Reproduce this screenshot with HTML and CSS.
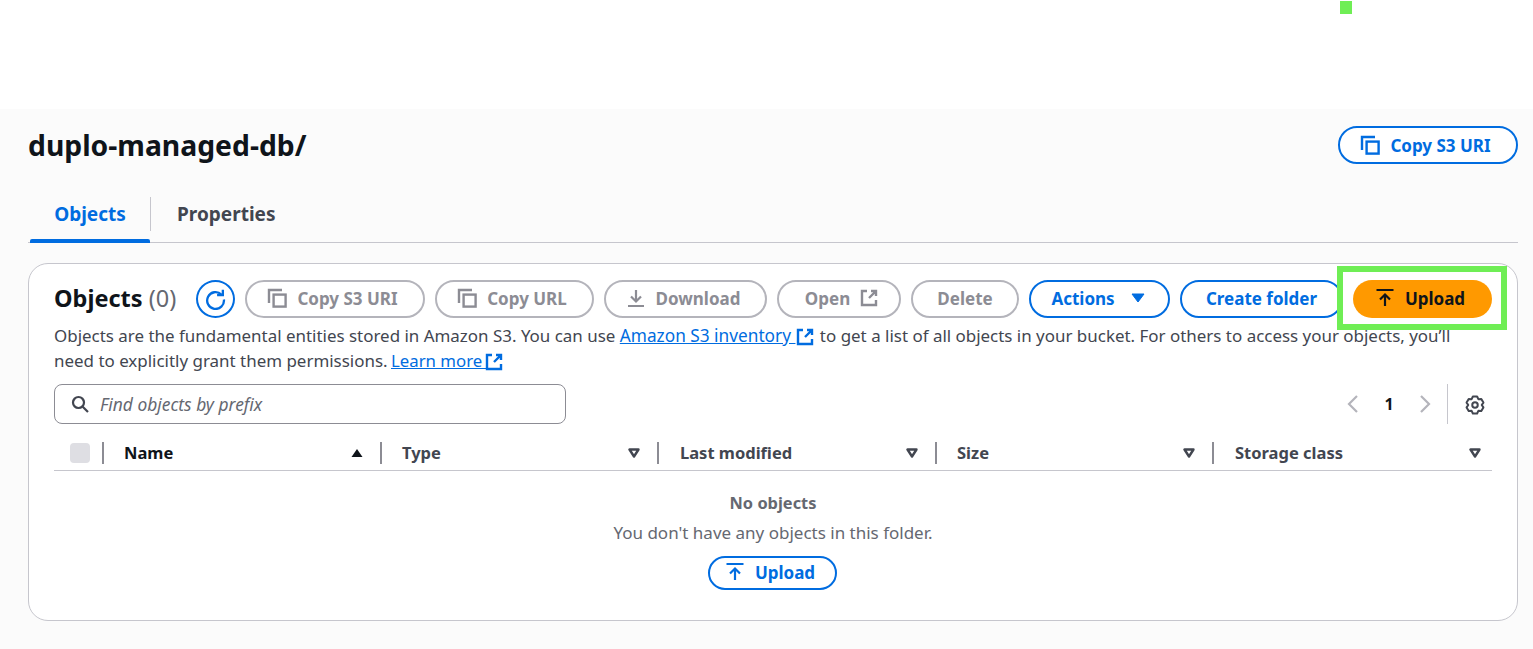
FILE: index.html
```html
<!DOCTYPE html>
<html lang="en">
<head>
<meta charset="utf-8">
<title>duplo-managed-db/</title>
<link rel="stylesheet" href="styles.css">
</head>
<body>
<svg class="defs" width="0" height="0" aria-hidden="true">
  <symbol id="i-copy" viewBox="0 0 20 20"><path d="M2 15V2h13" fill="none" stroke="currentColor" stroke-width="2.4"/><rect x="6.6" y="6.6" width="12" height="12" fill="none" stroke="currentColor" stroke-width="2.4"/></symbol>
  <symbol id="i-ext" viewBox="0 0 18 18"><path d="M7 2H2v14h14v-5M11 2h5v5M16 2 9 9" fill="none" stroke="currentColor" stroke-width="2.4"/></symbol>
  <symbol id="i-down" viewBox="0 0 20 20"><path d="M10 2v11M5 8.5l5 5 5-5M2 18h16" fill="none" stroke="currentColor" stroke-width="2.2"/></symbol>
  <symbol id="i-up" viewBox="0 0 20 20"><path d="M10 18V7M5 11.5l5-5 5 5M1.500 2h17" fill="none" stroke="currentColor" stroke-width="2.2"/></symbol>
</svg>

<div class="marker"></div>
<header class="topbar"></header>

<main class="page">
  <div class="title-row">
    <h1>duplo-managed-db/</h1>
    <button class="btn btn-blue btn-uri has-icon"><svg class="ic"><use href="#i-copy"/></svg>Copy S3 URI</button>
  </div>

  <nav class="tabs">
    <a class="tab active">Objects</a>
    <a class="tab">Properties</a>
  </nav>

  <section class="card">
    <div class="toolbar">
      <h2>Objects <span class="count">(0)</span></h2>
      <button class="refresh" aria-label="Refresh">
        <svg viewBox="0 0 20 20" width="21" height="21"><path d="M15.600 5.200A8 8 0 1 0 18 10" fill="none" stroke="currentColor" stroke-width="2.200"/><path d="M11.500 5.900h5.500V.800" fill="none" stroke="currentColor" stroke-width="2.200"/></svg>
      </button>
      <button class="btn btn-off w-uri has-icon"><svg class="ic"><use href="#i-copy"/></svg>Copy S3 URI</button>
      <button class="btn btn-off w-url has-icon"><svg class="ic"><use href="#i-copy"/></svg>Copy URL</button>
      <button class="btn btn-off w-dl has-icon"><svg class="ic"><use href="#i-down"/></svg>Download</button>
      <button class="btn btn-off w-open">Open<svg class="ic-ext"><use href="#i-ext"/></svg></button>
      <button class="btn btn-off w-del">Delete</button>
      <button class="btn btn-blue w-act">Actions<svg class="caret" viewBox="0 0 14 10"><path d="M1 1h12L7 9z" fill="currentColor" stroke="currentColor"/></svg></button>
      <button class="btn btn-blue w-cf">Create folder</button>
      <button class="btn btn-primary w-up has-icon"><svg class="ic"><use href="#i-up"/></svg>Upload</button>
      <div class="highlight"></div>
    </div>

    <p class="desc">Objects are the fundamental entities stored in Amazon S3. You can use <a class="link link-wide">Amazon S3 inventory <svg class="ic-link"><use href="#i-ext"/></svg></a> to get a list of all objects in your bucket. For others to access your objects, you’ll need to explicitly grant them permissions. <a class="link link-tight">Learn more <svg class="ic-link"><use href="#i-ext"/></svg></a></p>

    <div class="filter-row">
      <div class="search">
        <svg viewBox="0 0 18 18" width="18" height="18"><circle cx="7.500" cy="7.500" r="5.500" fill="none" stroke="currentColor" stroke-width="2.200"/><path d="m11.500 11.500 5.500 5.500" stroke="currentColor" stroke-width="2.200"/></svg>
        <span>Find objects by prefix</span>
      </div>
      <div class="pager">
        <svg class="chev" viewBox="0 0 12 20"><path d="M10 2 2 10l8 8" fill="none" stroke="currentColor" stroke-width="2.200"/></svg>
        <span class="page-num">1</span>
        <svg class="chev" viewBox="0 0 12 20"><path d="m2 2 8 8-8 8" fill="none" stroke="currentColor" stroke-width="2.200"/></svg>
        <span class="pager-sep"></span>
        <svg class="gear" viewBox="0 0 16 16"><path d="M6.310 1.210h3.380l1.010 2.110 2.330-.18 1.700 2.930-1.330 1.930 1.330 1.930-1.700 2.930-2.330-.18-1.010 2.110H6.310L5.300 12.680l-2.330.18-1.700-2.930L2.600 8 1.270 6.070l1.700-2.930 2.330.18z" fill="none" stroke="currentColor" stroke-width="1.600" stroke-linejoin="round"/><circle cx="8" cy="8" r="2.200" fill="none" stroke="currentColor" stroke-width="1.600"/></svg>
      </div>
    </div>

    <div class="thead">
      <div class="th-check"><span class="check"></span></div>
      <div class="th strong"><span>Name</span><svg class="sort" viewBox="0 0 12 10"><path d="M6 1 11.500 9H.5z" fill="currentColor"/></svg></div>
      <div class="th"><span>Type</span><svg class="sort" viewBox="0 0 12 10"><path d="M1.500 1.500h9L6 8.500z" fill="none" stroke="currentColor" stroke-width="2.400" stroke-linejoin="round"/></svg></div>
      <div class="th th-nudge"><span>Last modified</span><svg class="sort" viewBox="0 0 12 10"><path d="M1.500 1.500h9L6 8.500z" fill="none" stroke="currentColor" stroke-width="2.400" stroke-linejoin="round"/></svg></div>
      <div class="th"><span>Size</span><svg class="sort" viewBox="0 0 12 10"><path d="M1.500 1.500h9L6 8.500z" fill="none" stroke="currentColor" stroke-width="2.400" stroke-linejoin="round"/></svg></div>
      <div class="th th-nudge th-last"><span>Storage class</span><svg class="sort" viewBox="0 0 12 10"><path d="M1.500 1.500h9L6 8.500z" fill="none" stroke="currentColor" stroke-width="2.400" stroke-linejoin="round"/></svg></div>
    </div>

    <div class="empty">
      <strong>No objects</strong>
      <p>You don't have any objects in this folder.</p>
      <button class="btn btn-blue btn-small has-icon"><svg class="ic"><use href="#i-up"/></svg>Upload</button>
    </div>
  </section>
</main>
</body>
</html>
```

FILE: styles.css
```css
* { box-sizing: border-box; }
html, body { margin: 0; padding: 0; }
body {
  position: relative;
  height: 649px;
  overflow: hidden;
  background: #fbfbfb;
  color: #424650;
  font-family: "Noto Sans", "Open Sans", sans-serif;
  font-size: 17px;
  line-height: 25px;
}
.defs { position: absolute; }
.topbar { height: 109px; background: #fff; }
.marker { position: absolute; left: 1340px; top: 1px; width: 12px; height: 13px; background: #6fee55; }
.page { padding: 0 15px 0 28px; }

.title-row { display: flex; justify-content: space-between; align-items: center; padding-top: 2px; height: 72px; }
h1 { margin: -2px 0 0; font-size: 28.3px; line-height: 36px; font-weight: 700; color: #0f141a; }

.btn {
  display: inline-flex;
  flex: none;
  align-items: center;
  justify-content: center;
  height: 38px;
  padding: 0 0 2px;
  border: 2px solid #006ce0;
  border-radius: 20px;
  background: #fff;
  color: #006ce0;
  font-family: inherit;
  font-size: 17px;
  font-weight: 700;
  white-space: nowrap;
}
.has-icon { padding-right: 5px; }
.btn-blue { border-color: #006ce0; color: #006ce0; }
.btn-off { border-color: #b4b4bb; color: #8c8c94; }
.btn-primary { border: 0; background: #ff9900; color: #0f141a; }
.ic { width: 20px; height: 20px; margin-right: 10px; flex: none; }
.ic-ext { width: 18px; height: 18px; margin-left: 10px; flex: none; }
.ic-link { width: 18px; height: 18px; margin: 0 1px; vertical-align: -4px; color: #006ce0; }
.caret { width: 14px; height: 10px; margin-left: 16px; }

.btn-uri { width: 180px; margin-top: -2px; padding-bottom: 0; }

.tabs { display: flex; height: 62px; border-bottom: 1px solid #c6c6cd; align-items: stretch; padding-top: 12px; }
.tab { position: relative; display: flex; align-items: center; justify-content: center; padding-bottom: 6px; font-size: 19px; font-weight: 700; color: #424650; }
.tab.active { width: 120px; margin-left: 2px; color: #006ce0; }
.tab.active::after { content: ""; position: absolute; left: 0; right: 0; bottom: -1px; height: 4px; border-radius: 2px 2px 0 0; background: #006ce0; }
.tab.active::before { content: ""; position: absolute; right: -1px; top: 4px; height: 34px; width: 1px; background: #c6c6cd; }
.tab + .tab { margin-left: 27px; }

.card {
  margin-top: 20px;
  height: 358px;
  padding: 16px 25px 0;
  background: #fff;
  border: 1px solid #c6c6cd;
  border-radius: 20px;
}
.toolbar { position: relative; display: flex; align-items: center; height: 38px; gap: 10px; }
h2 { margin: -2px 0 0; width: 123px; font-size: 23.500px; line-height: 38px; font-weight: 700; color: #0f141a; flex: none; white-space: nowrap; }
.count { font-weight: 400; color: #656871; }
.refresh { display: flex; flex: none; align-items: center; justify-content: center; width: 39px; height: 38px; padding: 0; margin-left: 9px; border: 2px solid #006ce0; border-radius: 50%; background: #fff; color: #006ce0; }
.w-uri { width: 180px; }
.w-url { width: 159px; }
.w-dl { width: 163px; }
.w-open { width: 124px; padding-left: 5px; }
.w-del { width: 108px; }
.w-act { width: 141px; padding-right: 3px; }
.w-cf { width: 163px; }
.w-up { width: 139px; }
.highlight { position: absolute; left: 1283px; top: -14px; width: 170px; height: 64px; border: 6px solid #6fee55; }

.desc { margin: 5px 0 0; height: 50px; width: 1420px; font-size: 16.950px; color: #424650; }
.link { color: #006ce0; text-decoration: underline; }
.link-wide { font-size: 17.250px; }
.link-tight { font-size: 16.800px; margin-left: -1px; }
.link-tight .ic-link { margin-left: -2px; }

.filter-row { display: flex; justify-content: space-between; align-items: center; margin-top: 11px; height: 40px; }
.search { display: flex; align-items: center; gap: 11px; width: 512px; height: 40px; padding-left: 16px; background: #fff; border: 1px solid #8c8c94; border-radius: 8px; color: #424650; }
.search span { font-style: italic; font-size: 17.4px; color: #656871; }
.pager { display: flex; align-items: center; height: 40px; color: #b4b4bb; }
.chev { width: 12px; height: 20px; }
.page-num { width: 60px; text-align: center; font-size: 16px; font-weight: 700; color: #0f141a; }
.pager-sep { width: 1px; height: 40px; margin: 0 17px 0 16px; background: #c6c6cd; }
.gear { width: 20px; height: 20px; margin: 2px 7px 0 0; color: #424650; }

.thead { display: grid; grid-template-columns: 49px 278px 277px 278px 277px 279px; height: 35px; margin-top: 12px; border-bottom: 1px solid #c6c6cd; }
.th-check { display: flex; align-items: center; padding-left: 16px; }
.check { width: 20px; height: 20px; border-radius: 4px; background: #dedee3; }
.th { position: relative; display: flex; align-items: center; justify-content: space-between; padding: 0 18px 0 21px; font-size: 16.500px; font-weight: 700; color: #424650; }
.th-nudge { padding-left: 22px; }
.th span { margin-top: -2px; }
.th::before { content: ""; position: absolute; left: -1px; top: 6px; width: 2px; height: 22px; background: #8c8c94; }
.th.strong { color: #0f141a; }
.th-last { padding-right: 11px; }
.sort { width: 12px; height: 10px; }

.empty { display: flex; flex-direction: column; align-items: center; padding-top: 19px; color: #656871; }
.empty strong { display: block; font-size: 16.400px; line-height: 25px; }
.empty p { margin: 5px 0 0; }
.btn-small { width: 129px; height: 34px; margin: 11px 1px 0 0; }
```
